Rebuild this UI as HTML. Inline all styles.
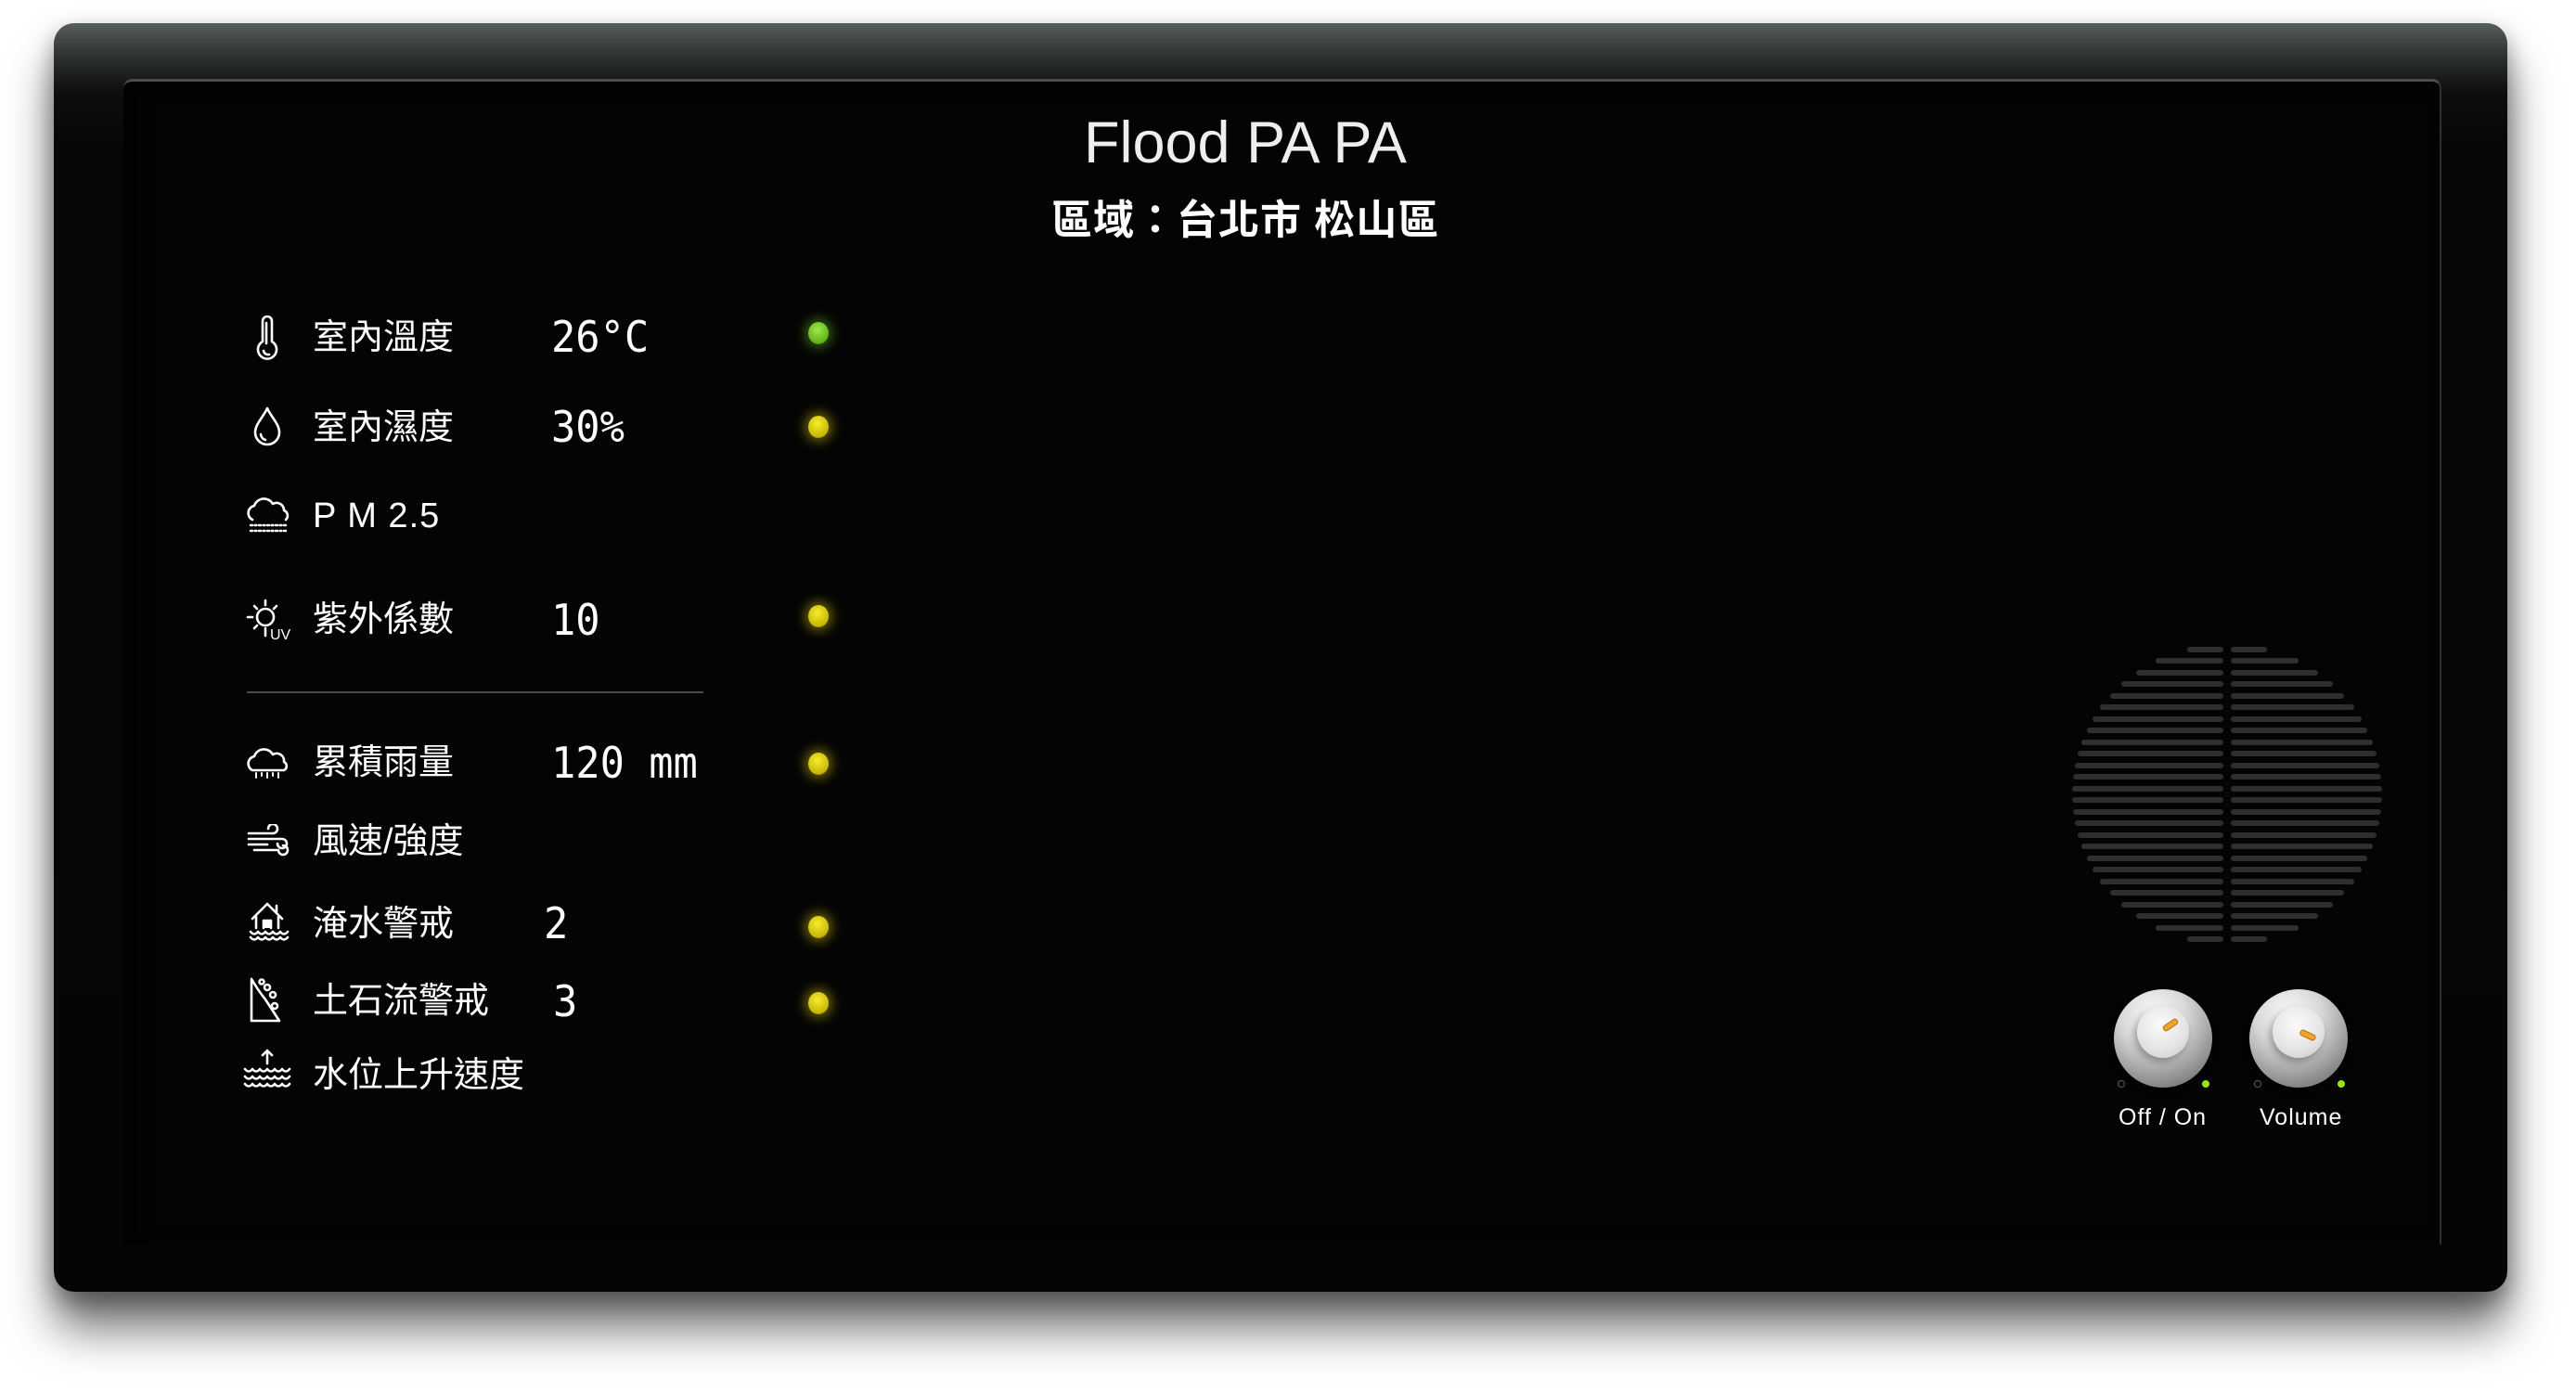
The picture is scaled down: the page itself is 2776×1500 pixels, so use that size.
<!DOCTYPE html>
<html><head><meta charset="utf-8"><style>
html,body{margin:0;padding:0;background:#fff;}
body{width:2776px;height:1500px;position:relative;overflow:hidden;font-family:"Liberation Sans","Noto Sans CJK TC",sans-serif;}
.outer{position:absolute;left:58px;top:25px;width:2644px;height:1367px;border-radius:22px;
background:linear-gradient(#575c5d 0px,#2a2d2e 40px,#0c0d0d 75px,#060606 140px,#050505 100%);
box-shadow:0 40px 50px rgba(0,0,0,.55),0 10px 25px rgba(0,0,0,.35);}
.inner{position:absolute;left:133px;top:85px;width:2496px;height:1253px;border-radius:10px 10px 0 0;background:#040404;
border-top:3px solid #4a4d4e;border-right:2px solid #2e3030;box-shadow:inset 12px 0 20px rgba(0,0,0,.6);}
.t{position:absolute;color:#fff;white-space:nowrap;}
.lab{font-size:38px;line-height:1;}
.val{font-family:"DejaVu Sans Mono","Liberation Mono",monospace;font-size:46px;line-height:1;color:#fff;transform:scaleX(.95);transform-origin:left;}
.led{position:absolute;width:22px;height:24px;border-radius:50%;}
.y{background:radial-gradient(circle at 45% 35%,#f4ec30,#c9b800 70%,#6a6200);box-shadow:0 0 12px 4px rgba(230,215,0,.45);}
.g{background:radial-gradient(circle at 45% 35%,#9de84a,#5fb418 70%,#2d5a08);box-shadow:0 0 12px 4px rgba(110,200,30,.45);}
svg.ic{position:absolute;fill:none;stroke:#fff;stroke-width:2.6;stroke-linecap:round;stroke-linejoin:round;}
.knob{position:absolute;width:106px;height:106px;border-radius:50%;
background:radial-gradient(circle at 40% 25%,#fafafa 0%,#d8d8d8 35%,#8a8a8a 75%,#555 100%);box-shadow:0 4px 8px rgba(0,0,0,.6);}
.cap{position:absolute;left:25px;top:18px;width:56px;height:56px;border-radius:50%;background:radial-gradient(circle at 45% 35%,#fbfbfb,#e3e3e3 60%,#c4c4c4);box-shadow:-3px 4px 8px rgba(0,0,0,.3);}
.tick{position:absolute;width:16px;height:5px;border-radius:3px;background:#f3a52a;border:1px solid #b06f10;}
.klab{position:absolute;color:#fff;font-size:25px;top:1190px;}
</style></head><body>
<div class="outer"></div>
<div class="inner"></div>

<div class="t" style="left:1168px;top:118px;font-size:63px;color:#eee;">Flood PA PA</div>
<div class="t" style="left:1133px;top:201px;font-size:44px;font-weight:bold;letter-spacing:1px;">區域：台北市 松山區</div>

<!-- icons -->
<svg class="ic" style="left:270px;top:340px" width="36" height="48" viewBox="0 0 36 48"><path d="M13 6a5 5 0 0 1 10 0v22a10 10 0 1 1-10 0z"/><path d="M14 38a5 5 0 0 0 6 4"/><path d="M17 8v22"/></svg>
<svg class="ic" style="left:270px;top:437px" width="36" height="46" viewBox="0 0 36 46"><path d="M18 3C14 12 5 20 5 29a13 13 0 0 0 26 0C31 20 22 12 18 3z"/><path d="M11 31a7 7 0 0 0 5 6"/></svg>
<svg class="ic" style="left:266px;top:532px" width="46" height="44" viewBox="0 0 46 44"><path d="M6 28a8 8 0 0 1 2-15 11 11 0 0 1 20-2 8 8 0 0 1 12 7 6 6 0 0 1 2 10"/><path d="M4 34h38M4 40h38" stroke-dasharray="2 2.5" stroke-width="2.4"/></svg>
<svg class="ic" style="left:264px;top:643px" width="50" height="48" viewBox="0 0 50 48"><circle cx="22" cy="22" r="9"/><path d="M22 4v5M8 22H3M10 10l3 3M34 10l-3 3M10 34l3-3"/><path d="M22 34v8"/><text x="27" y="46" fill="#fff" stroke="none" font-size="16" font-family="Liberation Sans">UV</text></svg>
<svg class="ic" style="left:266px;top:800px" width="46" height="42" viewBox="0 0 46 42"><path d="M6 30a8 8 0 0 1 2-15 11 11 0 0 1 20-2 8 8 0 0 1 12 8 5 5 0 0 1 0 9z"/><path d="M10 33v5M16 33v3M22 33v5M28 33v3M34 33v5" stroke-width="2"/></svg>
<svg class="ic" style="left:266px;top:888px" width="46" height="36" viewBox="0 0 46 36"><path d="M2 10h26a5 5 0 1 0-5-5M2 16h36a5 5 0 1 1-5 5M2 22h20M8 28h26a5 5 0 1 0 5-5"/></svg>
<svg class="ic" style="left:268px;top:970px" width="44" height="44" viewBox="0 0 44 44"><path d="M4 20L20 4l16 16M8 18v12M32 18v12M30 6v8"/><path d="M16 30v-8h8v8" fill="#fff"/><path d="M2 34q4 5 8 0q4 5 8 0q4 5 8 0q4 5 8 0q4 5 8 0M2 40q4 5 8 0q4 5 8 0q4 5 8 0q4 5 8 0q4 5 8 0"/></svg>
<svg class="ic" style="left:268px;top:1052px" width="44" height="50" viewBox="0 0 44 50"><path d="M3 3v45h30L18 25Q10 15 3 3z"/><circle cx="14" cy="6" r="2.5"/><circle cx="20" cy="12" r="3"/><circle cx="26" cy="20" r="3"/><circle cx="28" cy="32" r="3"/></svg>
<svg class="ic" style="left:262px;top:1130px" width="52" height="44" viewBox="0 0 52 44"><path d="M26 2v14M21 7l5-5 5 5"/><path d="M2 22q4 5 8 0q4 5 8 0q4 5 8 0q4 5 8 0q4 5 8 0q4 5 8 0M2 30q4 5 8 0q4 5 8 0q4 5 8 0q4 5 8 0q4 5 8 0q4 5 8 0M2 38q4 5 8 0q4 5 8 0q4 5 8 0q4 5 8 0q4 5 8 0q4 5 8 0"/></svg>

<!-- labels -->
<div class="t lab" style="left:337px;top:345px">室內溫度</div>
<div class="t lab" style="left:337px;top:442px">室內濕度</div>
<div class="t lab" style="left:337px;top:537px;font-size:38px;letter-spacing:1px">P M 2.5</div>
<div class="t lab" style="left:337px;top:649px">紫外係數</div>
<div class="t lab" style="left:337px;top:803px">累積雨量</div>
<div class="t lab" style="left:337px;top:888px">風速/強度</div>
<div class="t lab" style="left:337px;top:977px">淹水警戒</div>
<div class="t lab" style="left:337px;top:1060px">土石流警戒</div>
<div class="t lab" style="left:337px;top:1140px">水位上升速度</div>

<!-- values -->
<div class="t val" style="left:594px;top:340px">26°C</div>
<div class="t val" style="left:594px;top:437px">30%</div>
<div class="t val" style="left:594px;top:645px">10</div>
<div class="t val" style="left:594px;top:799px">120 mm</div>
<div class="t val" style="left:586px;top:972px">2</div>
<div class="t val" style="left:596px;top:1056px">3</div>

<!-- divider -->
<div style="position:absolute;left:266px;top:745px;width:492px;height:2px;background:#4a4a4a"></div>

<!-- leds -->
<div class="led g" style="left:871px;top:347px"></div>
<div class="led y" style="left:871px;top:448px"></div>
<div class="led y" style="left:871px;top:652px"></div>
<div class="led y" style="left:871px;top:811px"></div>
<div class="led y" style="left:871px;top:987px"></div>
<div class="led y" style="left:871px;top:1069px"></div>

<!-- speaker grille -->
<svg style="position:absolute;left:0;top:0" width="2776" height="1500" fill="#2e2e2e">
<g>
<rect x="2357" y="697" width="39" height="6" rx="3"/><rect x="2404" y="697" width="39" height="6" rx="3"/>
<rect x="2323" y="709" width="73" height="6" rx="3"/><rect x="2404" y="709" width="73" height="6" rx="3"/>
<rect x="2302" y="722" width="94" height="6" rx="3"/><rect x="2404" y="722" width="94" height="6" rx="3"/>
<rect x="2286" y="734" width="110" height="6" rx="3"/><rect x="2404" y="734" width="110" height="6" rx="3"/>
<rect x="2274" y="747" width="122" height="6" rx="3"/><rect x="2404" y="747" width="122" height="6" rx="3"/>
<rect x="2263" y="759" width="133" height="6" rx="3"/><rect x="2404" y="759" width="133" height="6" rx="3"/>
<rect x="2255" y="772" width="141" height="6" rx="3"/><rect x="2404" y="772" width="141" height="6" rx="3"/>
<rect x="2249" y="784" width="147" height="6" rx="3"/><rect x="2404" y="784" width="147" height="6" rx="3"/>
<rect x="2243" y="797" width="153" height="6" rx="3"/><rect x="2404" y="797" width="153" height="6" rx="3"/>
<rect x="2239" y="809" width="157" height="6" rx="3"/><rect x="2404" y="809" width="157" height="6" rx="3"/>
<rect x="2236" y="822" width="160" height="6" rx="3"/><rect x="2404" y="822" width="160" height="6" rx="3"/>
<rect x="2234" y="834" width="162" height="6" rx="3"/><rect x="2404" y="834" width="162" height="6" rx="3"/>
<rect x="2233" y="847" width="163" height="6" rx="3"/><rect x="2404" y="847" width="163" height="6" rx="3"/>
<rect x="2233" y="859" width="163" height="6" rx="3"/><rect x="2404" y="859" width="163" height="6" rx="3"/>
<rect x="2234" y="872" width="162" height="6" rx="3"/><rect x="2404" y="872" width="162" height="6" rx="3"/>
<rect x="2236" y="884" width="160" height="6" rx="3"/><rect x="2404" y="884" width="160" height="6" rx="3"/>
<rect x="2239" y="897" width="157" height="6" rx="3"/><rect x="2404" y="897" width="157" height="6" rx="3"/>
<rect x="2243" y="909" width="153" height="6" rx="3"/><rect x="2404" y="909" width="153" height="6" rx="3"/>
<rect x="2249" y="922" width="147" height="6" rx="3"/><rect x="2404" y="922" width="147" height="6" rx="3"/>
<rect x="2255" y="934" width="141" height="6" rx="3"/><rect x="2404" y="934" width="141" height="6" rx="3"/>
<rect x="2263" y="947" width="133" height="6" rx="3"/><rect x="2404" y="947" width="133" height="6" rx="3"/>
<rect x="2274" y="959" width="122" height="6" rx="3"/><rect x="2404" y="959" width="122" height="6" rx="3"/>
<rect x="2286" y="972" width="110" height="6" rx="3"/><rect x="2404" y="972" width="110" height="6" rx="3"/>
<rect x="2302" y="984" width="94" height="6" rx="3"/><rect x="2404" y="984" width="94" height="6" rx="3"/>
<rect x="2323" y="997" width="73" height="6" rx="3"/><rect x="2404" y="997" width="73" height="6" rx="3"/>
<rect x="2357" y="1009" width="39" height="6" rx="3"/><rect x="2404" y="1009" width="39" height="6" rx="3"/>
</g>
<circle cx="2286" cy="1168" r="3.5" fill="none" stroke="#444" stroke-width="1.5"/>
<circle cx="2377" cy="1168" r="4" fill="#9be600"/>
<circle cx="2433" cy="1168" r="3.5" fill="none" stroke="#444" stroke-width="1.5"/>
<circle cx="2523" cy="1168" r="4" fill="#9be600"/>
</svg>

<!-- knobs -->
<div class="knob" style="left:2278px;top:1066px"><div class="cap"></div><div class="tick" style="left:52px;top:35px;transform:rotate(-35deg)"></div></div>
<div class="knob" style="left:2424px;top:1066px"><div class="cap"></div><div class="tick" style="left:54px;top:46px;transform:rotate(25deg)"></div></div>
<div class="klab" style="left:2283px;letter-spacing:1px">Off / On</div>
<div class="klab" style="left:2435px;letter-spacing:1px">Volume</div>
</body></html>
